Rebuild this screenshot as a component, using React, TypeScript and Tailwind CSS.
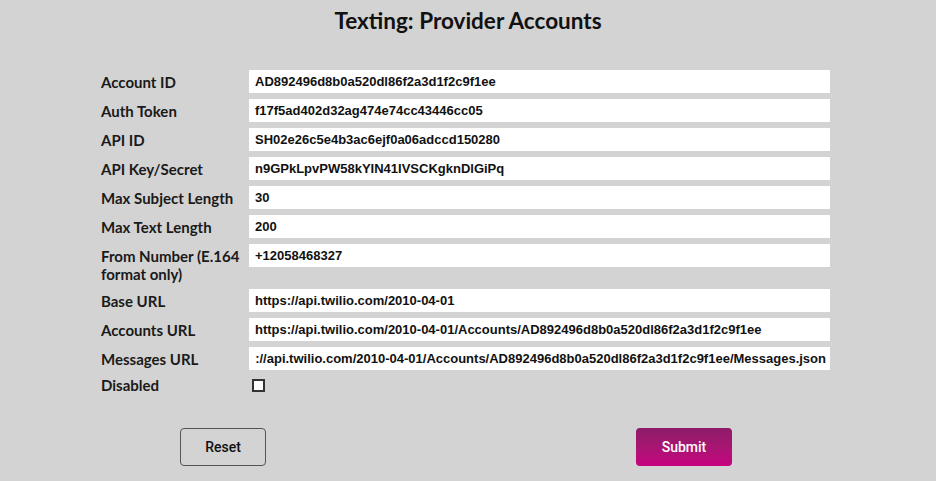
const fields = [
  { label: 'Account ID', value: 'AD892496d8b0a520dl86f2a3d1f2c9f1ee' },
  { label: 'Auth Token', value: 'f17f5ad402d32ag474e74cc43446cc05' },
  { label: 'API ID', value: 'SH02e26c5e4b3ac6ejf0a06adccd150280' },
  { label: 'API Key/Secret', value: 'n9GPkLpvPW58kYIN41IVSCKgknDlGiPq' },
  { label: 'Max Subject Length', value: '30' },
  { label: 'Max Text Length', value: '200' },
  { label: 'From Number (E.164 format only)', value: '+12058468327' },
  { label: 'Base URL', value: 'https://api.twilio.com/2010-04-01' },
  { label: 'Accounts URL', value: 'https://api.twilio.com/2010-04-01/Accounts/AD892496d8b0a520dl86f2a3d1f2c9f1ee' },
  {
    label: 'Messages URL',
    value: 'https://api.twilio.com/2010-04-01/Accounts/AD892496d8b0a520dl86f2a3d1f2c9f1ee/Messages.json',
    scrolled: true,
  },
];

const labelFont = { fontFamily: 'Lato, "Noto Sans", sans-serif' };

const App = () => {
  return (
    <div className="min-h-[481px] w-full bg-[#d3d3d3] text-[#111]">
      <h1
        className="pt-[8px] text-center text-[22.5px] leading-[26px] font-bold text-[#111]"
        style={labelFont}
      >
        Texting: Provider Accounts
      </h1>

      <form className="mt-[36px] ml-[101px] w-[729px] flex flex-col gap-[6px]">
        {fields.map((f) => (
          <div key={f.label} className="flex items-start">
            <label
              className="w-[148px] shrink-0 pt-[3px] pr-[6px] text-[15px] leading-[18px] font-bold text-[#1a1a1a]"
              style={labelFont}
            >
              {f.label}
            </label>
            {f.scrolled ? (
              <div className="flex-1 min-w-0 h-[23px] bg-white pl-[6px] pr-[4px] flex items-center">
                <div className="flex-1 min-w-0 overflow-hidden flex justify-end">
                  <span className="shrink-0 whitespace-nowrap font-['Liberation_Sans',Arial,sans-serif] text-[13px] font-bold text-[#111]">
                    {f.value}
                  </span>
                </div>
              </div>
            ) : (
              <input
                readOnly
                defaultValue={f.value}
                className="flex-1 min-w-0 h-[23px] bg-white px-[6px] outline-none font-['Liberation_Sans',Arial,sans-serif] text-[13px] font-bold text-[#111]"
              />
            )}
          </div>
        ))}
        <div className="flex items-center">
          <label
            className="w-[148px] shrink-0 text-[15px] leading-[18px] font-bold text-[#1a1a1a]"
            style={labelFont}
          >
            Disabled
          </label>
          <div className="ml-[3px] w-[13px] h-[13px] border-2 border-[#333] bg-white" />
        </div>
      </form>

      <div className="mt-[34px] flex">
        <button
          type="button"
          className="ml-[180px] w-[86px] h-[38px] rounded-[4px] border border-[#555] bg-transparent text-[14px] font-medium text-[#111] font-['Roboto',sans-serif]"
        >
          Reset
        </button>
        <button
          type="button"
          className="ml-[370px] w-[96px] h-[38px] rounded-[4px] bg-gradient-to-b from-[#8c1c68] to-[#c6007f] text-[14px] font-medium text-white font-['Roboto',sans-serif]"
        >
          Submit
        </button>
      </div>
    </div>
  );
};

export default App;
